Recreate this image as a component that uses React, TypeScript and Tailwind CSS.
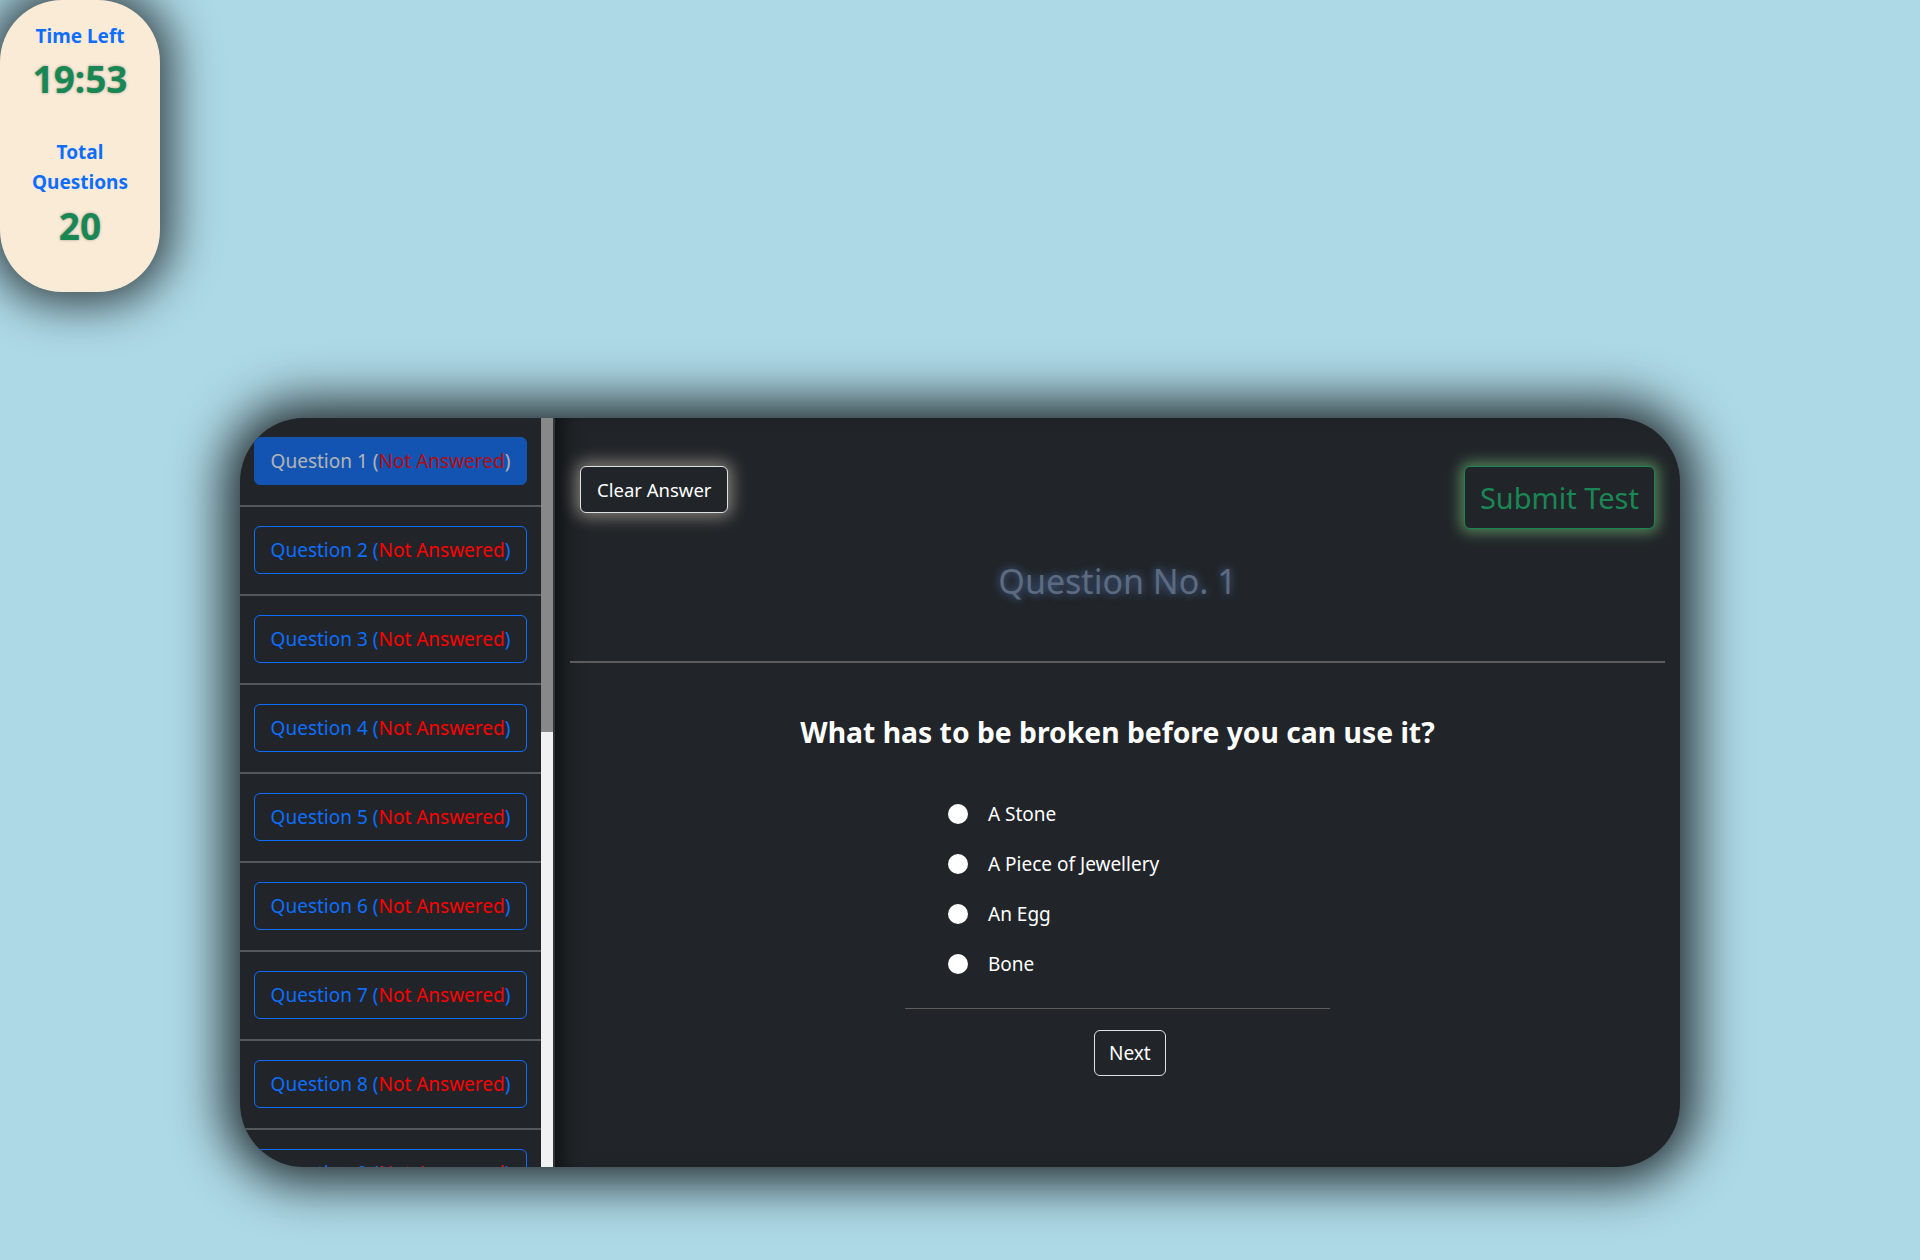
import React from 'react';

const questions = Array.from({ length: 20 }, (_, i) => i + 1);
const options = ['A Stone', 'A Piece of Jewellery', 'An Egg', 'Bone'];

const TimerCard: React.FC = () => (
  <div className="absolute left-0 top-0 flex h-[292px] w-[160px] flex-col items-center rounded-[62px] bg-[#faebd7] px-[18px] pt-[21px] text-center font-bold shadow-[0_0_45px_12px_rgba(0,0,0,0.7)]">
    <span className="text-[19px] leading-[30px] text-[#0d6efd]">Time Left</span>
    <span className="mt-[4px] text-[37px] leading-[48px] text-[#198754] [text-shadow:0_0_3px_rgba(0,0,0,0.35)]">19:53</span>
    <span className="mt-[34px] text-[19px] leading-[30px] text-[#0d6efd]">Total Questions</span>
    <span className="mt-[5px] text-[37px] leading-[48px] text-[#198754] [text-shadow:0_0_3px_rgba(0,0,0,0.35)]">20</span>
  </div>
);

export default function App() {
  return (
    <div className="relative min-h-screen overflow-hidden bg-[#add8e6] pb-[93px] pt-[418px] font-['Noto_Sans',sans-serif]">
      <TimerCard />

      <div className="mx-auto flex h-[749px] w-[1440px] overflow-hidden rounded-[64px] bg-[#212529] shadow-[0_0_50px_16px_rgba(0,0,0,0.8)]">
        {/* Question list */}
        <aside className="w-[301px] shrink-0 overflow-hidden">
          {questions.map((n) => (
            <div key={n}>
              <div className="px-[14px] pb-[20px] pt-[19px]">
                <button
                  className={
                    n === 1
                      ? 'h-[48px] w-[273px] rounded-[6px] border border-[#0d6efd] bg-[#0d6efd] text-[19px] text-white opacity-65'
                      : 'h-[48px] w-[273px] rounded-[6px] border border-[#0d6efd] text-[19px] text-[#0d6efd]'
                  }
                >
                  Question {n} (<span className="text-[#ff0000]">Not Answered</span>)
                </button>
              </div>
              <div className="h-[2px] bg-[#54585c]" />
            </div>
          ))}
        </aside>

        {/* scrollbar of the list */}
        <div className="flex w-[12px] shrink-0 flex-col bg-[#f1f1f1]">
          <div className="h-[314px] bg-[#888888]" />
        </div>

        {/* Question body */}
        <main className="flex flex-1 flex-col border-l-2 border-[#30353a] px-[25px] pt-[48px] shadow-[inset_18px_0_24px_-14px_rgba(0,0,0,0.7)]">
          <div className="flex items-start justify-between">
            <button className="h-[47px] rounded-[6px] border border-[#dee2e6] bg-[#212529] px-[16px] text-[18.5px] text-white shadow-[0_0_16px_4px_rgba(250,235,215,0.45)]">
              Clear Answer
            </button>
            <button className="h-[63px] rounded-[6px] border border-[#198754] bg-[#212529] px-[15px] text-[29px] text-[#198754] shadow-[0_0_14px_4px_rgba(144,238,144,0.45)]">
              Submit Test
            </button>
          </div>

          <h2 className="mt-[31px] text-center text-[34px] leading-[43px] text-[#5d6b80] [text-shadow:0_0_8px_rgba(100,149,237,0.6)]">
            Question No. 1
          </h2>

          <div className="mx-[-10px] mt-[58px] h-[2px] bg-[#5c5c5c]" />

          <h3 className="mt-[51px] text-center text-[28.3px] font-bold leading-[36px] text-white">
            What has to be broken before you can use it?
          </h3>

          <div className="mx-auto mt-[49px] w-[425px]">
            <div className="flex flex-col gap-[20px] pl-[43px]">
              {options.map((opt) => (
                <label key={opt} className="flex h-[30px] items-center gap-[20px] text-[19px] text-white">
                  <input type="radio" name="answer" className="h-[20px] w-[20px] appearance-none rounded-full bg-white" />
                  {opt}
                </label>
              ))}
            </div>
            <div className="mt-[29px] h-px bg-[#5c5c5c]" />
            <div className="mt-[21px] pl-[189px]">
              <button className="h-[46px] rounded-[6px] border border-[#dee2e6] px-[14px] text-[19px] text-white">
                Next
              </button>
            </div>
          </div>
        </main>
      </div>
    </div>
  );
}
